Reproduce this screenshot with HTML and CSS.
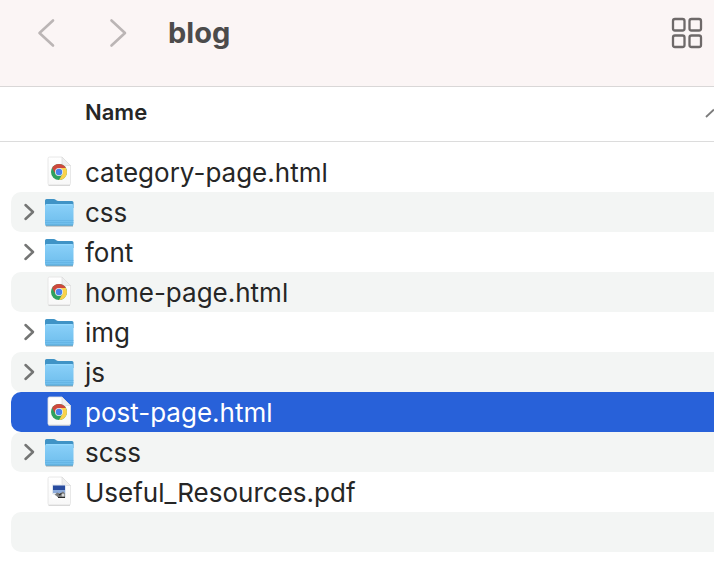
FILE: index.html
```
<!DOCTYPE html>
<html lang="en">
<head>
<meta charset="utf-8">
<title>blog</title>
<link rel="stylesheet" href="styles.css">
</head>
<body>
<svg class="defs" aria-hidden="true">
  <defs>
    <linearGradient id="folder-fill" x1="0" y1="0" x2="0" y2="1">
      <stop offset="0" stop-color="#8ad0f9"/>
      <stop offset="1" stop-color="#6dbdec"/>
    </linearGradient>
    <linearGradient id="paper-fill" x1="0" y1="0" x2="0" y2="1">
      <stop offset="0" stop-color="#fff"/>
      <stop offset="1" stop-color="#f8f8f8"/>
    </linearGradient>
    <symbol id="folder" viewBox="0 0 32 32">
      <path d="M2 30H29" stroke="#8d989d" stroke-width="1.2" opacity=".7"/>
      <path d="M1 4.500Q1 3 2.500 3H9.500Q11 3 12 4t2.500 1H28Q29.500 5 29.500 6.500V12H1z" fill="#3f93c6"/>
      <path d="M1 9.500Q1 8 2.500 8H28Q29.500 8 29.500 9.500V28Q29.500 29.500 28 29.500H2.500Q1 29.500 1 28z" fill="url(#folder-fill)"/>
      <path d="M2 8.700H28.500" stroke="#9adcff" stroke-width="1"/>
      <path d="M1 24.500H29.500M1 26.500H29.500" stroke="#5eafe0" stroke-width=".6"/>
      <path d="M1.500 29.200H29" stroke="#4796c4" stroke-width=".8"/>
    </symbol>
    <symbol id="paper" viewBox="0 0 32 32">
      <path d="M4 2.500Q4 1 5.500 1H18L26.500 9.500V27.500Q26.500 29 25 29H5.500Q4 29 4 27.500z" fill="url(#paper-fill)" stroke="#e2e2e2" stroke-width=".8"/>
      <path d="M18 1L26.500 9.500H20Q18 9.500 18 7.500z" fill="#efefef" stroke="#d8d8d8" stroke-width=".6"/>
      <path d="M4.500 29.400H26" stroke="#cdcdcd" stroke-width=".8"/>
    </symbol>
    <symbol id="chrome" viewBox="0 0 32 32">
      <use href="#paper"/>
      <circle cx="15" cy="16" r="8" fill="#2fa160"/>
      <path d="M8.100 12A8 8 0 0 1 21.900 12H15L11.600 18z" fill="#ce483d"/>
      <path d="M15 12H21.900A8 8 0 0 1 15 24L18.500 18z" fill="#fbd14b"/>
      <circle cx="15" cy="16" r="4" fill="#eaf0ec"/>
      <circle cx="15" cy="16" r="3.200" fill="#4a82ed"/>
    </symbol>
    <symbol id="pdf" viewBox="0 0 32 32">
      <use href="#paper"/>
      <path d="M8 8.500H22V21.500H8z" fill="#dfe6ee"/>
      <path d="M9 9.500H21V14H9z" fill="#284b9e"/>
      <path d="M9 14H21V17H9z" fill="#8dabdb"/>
      <path d="M10 19.500L13 16.500L16 17.500L19 15.500L21 17.500V21.500H13z" fill="#77797b"/>
      <path d="M8 18L12 19.500L15 22.500H8z" fill="#fff"/>
      <path d="M15 19L17.500 17.500M14 21.500H21" stroke="#292b2c" stroke-width="1.200"/>
      <circle cx="19" cy="19" r="1.500" fill="#d6d8d9"/>
    </symbol>
    <symbol id="disclosure" viewBox="0 0 12 18">
      <path d="M2.500 2L10 9L2.500 16" fill="none" stroke="#747574" stroke-width="2.500" stroke-linecap="round" stroke-linejoin="round"/>
    </symbol>
  </defs>
</svg>

<header class="toolbar">
  <nav class="history" aria-label="History">
    <button class="icon-button" type="button" aria-label="Back">
      <svg width="20" height="32" viewBox="0 0 20 32"><path d="M17 3.500L3.500 16L17 28.500" fill="none" stroke="#bbb5b5" stroke-width="2.600" stroke-linecap="round" stroke-linejoin="round"/></svg>
    </button>
    <button class="icon-button" type="button" aria-label="Forward">
      <svg width="20" height="32" viewBox="0 0 20 32"><path d="M3.500 3.500L17 16L3.500 28.500" fill="none" stroke="#bbb5b5" stroke-width="2.600" stroke-linecap="round" stroke-linejoin="round"/></svg>
    </button>
  </nav>
  <h1 class="title">blog</h1>
  <button class="icon-button" type="button" aria-label="Icon view">
    <svg width="32" height="32" viewBox="0 0 32 32"><g fill="none" stroke="#6e6969" stroke-width="2.300"><rect x="2" y="2" width="11.500" height="11.500" rx="2"/><rect x="18.500" y="2" width="11.500" height="11.500" rx="2"/><rect x="2" y="18.500" width="11.500" height="11.500" rx="2"/><rect x="18.500" y="18.500" width="11.500" height="11.500" rx="2"/></g></svg>
  </button>
</header>

<table class="files">
  <thead>
    <tr><th scope="col" aria-sort="ascending">
      <button class="sort" type="button">Name
        <svg width="9" height="12" viewBox="0 0 9 12" aria-hidden="true"><path d="M1 11L9 3.500" fill="none" stroke="#7b7b7b" stroke-width="1.800"/></svg>
      </button>
    </th></tr>
  </thead>
  <tbody>
    <tr><td><div class="row"><span class="toggle"></span><svg class="icon"><use href="#chrome"/></svg><span class="name">category-page.html</span></div></td></tr>
    <tr><td><div class="row"><button class="toggle" type="button" aria-label="Expand css"><svg width="12" height="18"><use href="#disclosure"/></svg></button><svg class="icon"><use href="#folder"/></svg><span class="name">css</span></div></td></tr>
    <tr><td><div class="row"><button class="toggle" type="button" aria-label="Expand font"><svg width="12" height="18"><use href="#disclosure"/></svg></button><svg class="icon"><use href="#folder"/></svg><span class="name">font</span></div></td></tr>
    <tr><td><div class="row"><span class="toggle"></span><svg class="icon"><use href="#chrome"/></svg><span class="name">home-page.html</span></div></td></tr>
    <tr><td><div class="row"><button class="toggle" type="button" aria-label="Expand img"><svg width="12" height="18"><use href="#disclosure"/></svg></button><svg class="icon"><use href="#folder"/></svg><span class="name">img</span></div></td></tr>
    <tr><td><div class="row"><button class="toggle" type="button" aria-label="Expand js"><svg width="12" height="18"><use href="#disclosure"/></svg></button><svg class="icon"><use href="#folder"/></svg><span class="name">js</span></div></td></tr>
    <tr aria-selected="true"><td><div class="row selected"><span class="toggle"></span><svg class="icon"><use href="#chrome"/></svg><span class="name">post-page.html</span></div></td></tr>
    <tr><td><div class="row"><button class="toggle" type="button" aria-label="Expand scss"><svg width="12" height="18"><use href="#disclosure"/></svg></button><svg class="icon"><use href="#folder"/></svg><span class="name">scss</span></div></td></tr>
    <tr><td><div class="row"><span class="toggle"></span><svg class="icon"><use href="#pdf"/></svg><span class="name">Useful_Resources.pdf</span></div></td></tr>
    <tr><td><div class="row"></div></td></tr>
  </tbody>
</table>
</body>
</html>
```
FILE: styles.css
```
* {
  box-sizing: border-box;
}

body {
  margin: 0;
  background: #fff;
  color: #262626;
  font-family: Inter, "Liberation Sans", sans-serif;
  font-size: 26px;
  line-height: 40px;
}

button {
  padding: 0;
  border: 0;
  background: none;
  color: inherit;
  font: inherit;
}

svg {
  display: block;
  flex: none;
}

.defs {
  position: absolute;
  width: 0;
  height: 0;
}

.toolbar {
  display: flex;
  align-items: center;
  padding: 13px 11px 33px 36px;
  border-bottom: 1px solid #d9d7d7;
  background: #fbf5f5;
}

.history {
  display: flex;
  gap: 52px;
}

.title {
  flex: 1;
  margin: 0 0 0 40px;
  color: #4c4b4b;
  font-size: 29px;
  font-weight: 700;
  line-height: 40px;
}

.files {
  width: 100%;
  border-collapse: separate;
  border-spacing: 0;
}

.files th {
  padding: 0 0 0 85px;
  border-bottom: 1px solid #dcdcdc;
}

.sort {
  display: flex;
  align-items: center;
  justify-content: space-between;
  width: 100%;
  padding: 5px 0 9px;
  font-size: 22px;
  font-weight: 600;
}

.files td {
  padding: 0 0 0 11px;
}

.files tbody::before {
  content: "";
  display: block;
  height: 10px;
}

.row {
  display: flex;
  align-items: center;
  height: 40px;
  padding-left: 12px;
  border-radius: 10px 0 0 10px;
}

.files tr:nth-child(even) .row {
  background: #f3f5f4;
}

.files .row.selected {
  background: #2861d9;
  color: #fff;
}

.toggle {
  width: 21px;
}

.icon {
  width: 32px;
  height: 32px;
  margin-right: 9px;
}

.name {
  padding-top: 2px;
}
```
